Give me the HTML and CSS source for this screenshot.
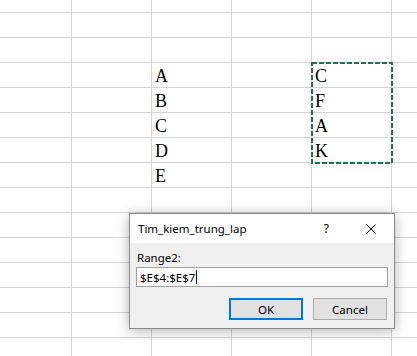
FILE: index.html
```html
<!DOCTYPE html>
<html lang="en">
<head>
    <meta charset="UTF-8">
    <title>Tim_kiem_trung_lap</title>
    <link rel="stylesheet" href="styles.css">
</head>
<body>
    <div class="sheet">
        <div class="grid" id="grid"></div>

        <!-- copy marquee around E4:E7 -->
        <svg class="marquee" width="82" height="102" viewBox="0 0 82 102">
            <rect x="1" y="1" width="80" height="100" fill="none" stroke="#217346" stroke-width="2" stroke-dasharray="5 2"/>
        </svg>

        <div class="dialog">
            <div class="dialog-title">
                <span class="title-text">Tim_kiem_trung_lap</span>
                <span class="help">?</span>
                <svg class="close" width="10" height="10" viewBox="0 0 10 10">
                    <path d="M0.5 0.5 L9.5 9.5 M9.5 0.5 L0.5 9.5" stroke="#000" stroke-width="1" fill="none"/>
                </svg>
            </div>
            <div class="dialog-body">
                <label class="field-label">Range2:</label>
                <div class="field"><span>$E$4:$E$7</span><span class="caret"></span></div>
                <div class="buttons">
                    <button class="btn btn-default">OK</button>
                    <button class="btn">Cancel</button>
                </div>
            </div>
        </div>
    </div>

    <script>
        // build the cells, 6 columns x 15 rows (row 0 is the cut-off one at the top)
        const grid = document.getElementById('grid');
        const colC = { 3: 'A', 4: 'B', 5: 'C', 6: 'D', 7: 'E' };
        const colE = { 3: 'C', 4: 'F', 5: 'A', 6: 'K' };

        for (let r = 0; r < 15; r++) {
            for (let c = 0; c < 6; c++) {
                const cell = document.createElement('div');
                cell.className = 'cell';
                if (c === 2 && colC[r]) cell.textContent = colC[r];
                if (c === 4 && colE[r]) cell.textContent = colE[r];
                grid.appendChild(cell);
            }
        }
    </script>
</body>
</html>
```

FILE: styles.css
```css
* {
    margin: 0;
    padding: 0;
    box-sizing: border-box;
}

body {
    background-color: white;
    overflow: hidden;
}

.sheet {
    position: relative;
    width: 417px;
    height: 356px;
    overflow: hidden;
}

.grid {
    display: grid;
    grid-template-columns: 71px 79px 79px 79px 79px 40px;
    grid-template-rows: 12px repeat(14, 24px);
    gap: 1px;
    background-color: #d4d4d4;
    width: 440px;
}

.cell {
    background-color: white;
    display: flex;
    align-items: flex-end;
    padding: 0 0 1px 3px;
    font-family: "Liberation Serif", "Times New Roman", serif;
    font-size: 18px;
    line-height: 20px;
    color: #000;
}

.marquee {
    position: absolute;
    left: 311px;
    top: 62px;
}

.dialog {
    position: absolute;
    left: 129px;
    top: 213px;
    width: 266px;
    height: 116px;
    border: 1px solid #8a8a8a;
    background-color: #f0f0f0;
    box-shadow: 0 2px 12px rgba(0, 0, 0, 0.3);
    font-family: "Noto Sans", "Open Sans", sans-serif;
    font-size: 11.5px;
    color: #000;
}

.dialog-title {
    height: 29px;
    background-color: white;
    display: flex;
    align-items: center;
    padding-left: 8px;
}

.title-text {
    flex: 1;
}

.help {
    margin-right: 37px;
    font-size: 12px;
}

.close {
    margin-right: 18px;
}

.dialog-body {
    padding: 6px 6px 0 7px;
}

.field-label {
    display: block;
    line-height: 17px;
}

.field {
    margin-top: 1px;
    width: 252px;
    height: 20px;
    margin-left: -1px;
    border: 1px solid #a0a0a0;
    background-color: white;
    display: flex;
    align-items: center;
    padding-left: 3px;
}

.caret {
    width: 1px;
    height: 14px;
    background-color: #000;
    margin-left: 1px;
}

.buttons {
    display: flex;
    justify-content: flex-end;
    gap: 10px;
    margin-top: 11px;
    padding-right: 1px;
}

.btn {
    width: 74px;
    height: 22px;
    background-color: #e1e1e1;
    border: 1px solid #adadad;
    font-family: "Noto Sans", "Open Sans", sans-serif;
    font-size: 11.5px;
    color: #000;
}

.btn-default {
    border: 2px solid #0078d7;
}
```
